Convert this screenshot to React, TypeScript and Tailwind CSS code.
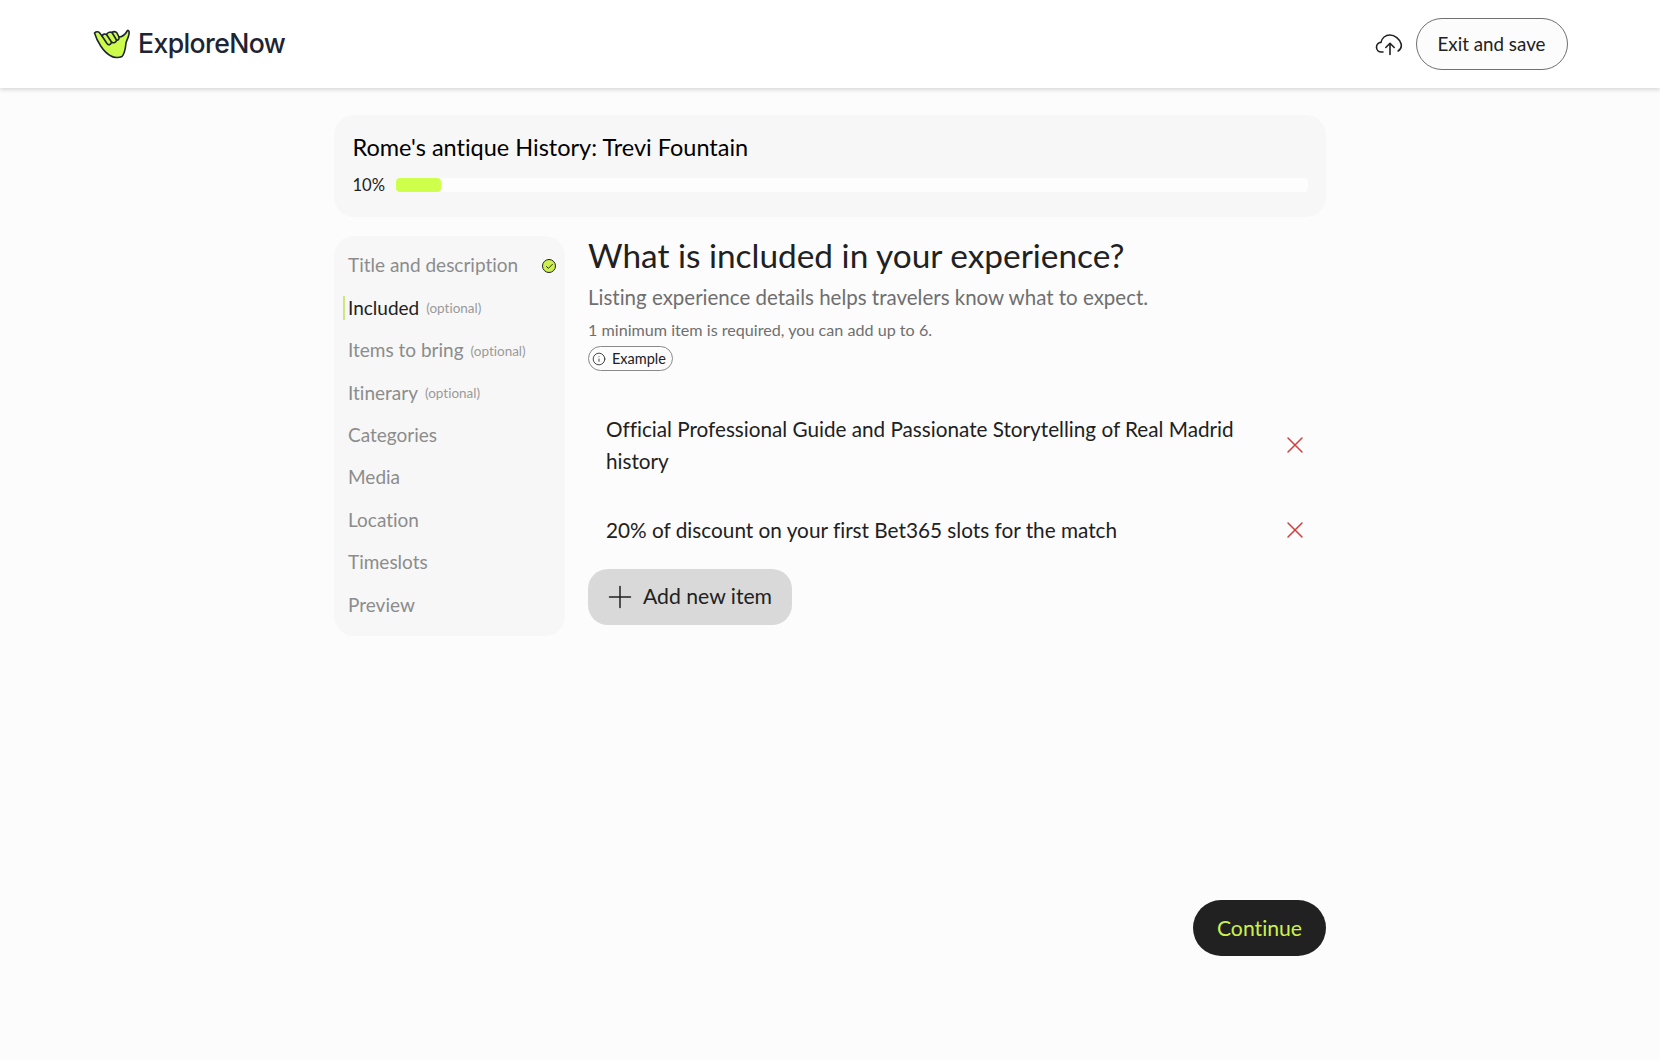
import React from 'react';
import { Plus, X, Info, Check } from 'lucide-react';

const steps = [
  { label: 'Title and description', done: true },
  { label: 'Included', optional: true, active: true },
  { label: 'Items to bring', optional: true },
  { label: 'Itinerary', optional: true },
  { label: 'Categories' },
  { label: 'Media' },
  { label: 'Location' },
  { label: 'Timeslots' },
  { label: 'Preview' },
];

const Logo = () => (
  <svg width="37" height="31" viewBox="0 0 37 31" className="shrink-0">
    <path
      d="M1.5 5 C3.5 3 6 3.5 7.5 6 L9 8 C10 6 12 5.5 13.5 6.5 C14.5 4.5 17 3.5 19 4.5 C20 3.5 22.5 3 24 5 L26 9 C29 9 32.5 6 34.5 2.5 C36 2 36.3 4 36 6 C35.5 10 33.5 12 33 15 C32.5 20 31.5 26 29 28.5 C26 30 21 30 18 28 C10 24 4 13 1.5 5 Z"
      fill="#cdfb4b"
      stroke="#1d2433"
      strokeWidth="1.6"
      strokeLinejoin="round"
    />
    <path
      d="M9 8 L14 15.5 C15.5 17.5 18 17 18.5 14 L13.5 6.5 M18.5 14 C20.5 15.5 23.5 14.5 23.5 12 L19 4.5 M23.5 12 C25 12.5 26.5 11 26 9"
      fill="none"
      stroke="#1d2433"
      strokeWidth="1.6"
      strokeLinecap="round"
      strokeLinejoin="round"
    />
  </svg>
);

const CloudIcon = () => (
  <svg width="28" height="24" viewBox="0 0 28 24" fill="none" stroke="#212121" strokeWidth="1.6" strokeLinecap="round" strokeLinejoin="round">
    <path d="M8 20 H6.5 C3.5 20 1.5 17.8 1.5 15.2 C1.5 12.6 3.5 10.6 6 10.4 C7 6 10.5 3 14.8 3 C20 3 24.5 7 26 11.5 C26.8 14.5 25.6 17.5 23.2 19" />
    <path d="M15 22.5 V11.5 M10.8 15.5 L15 11.3 L19.2 15.5" />
  </svg>
);

export default function App() {
  return (
    <div className="min-h-[1060px] bg-[#fcfcfc] font-['Lato',sans-serif] [font-variant-ligatures:none] text-[#212121]">
      <header className="h-[88px] bg-white shadow-[0_2px_4px_rgba(0,0,0,0.14)] flex items-center justify-between pl-[93px] pr-[92px]">
        <div className="flex items-center gap-[8px]">
          <Logo />
          <span className="font-['Inter',sans-serif] text-[26.6px] font-medium tracking-[-0.6px] text-[#1d2433]">ExploreNow</span>
        </div>
        <div className="flex items-center gap-[13px]">
          <CloudIcon />
          <button className="h-[52px] w-[152px] rounded-full border border-[#707070] bg-[#fcfcfc] pr-[1px] text-[18.8px] text-[#212121]">Exit and save</button>
        </div>
      </header>

      <main className="w-[992px] mx-auto pt-[27px]">
        <section className="h-[102px] rounded-[20px] bg-[#f7f7f7] pl-[18.5px] pr-[18px] pt-[16px]">
          <h1 className="text-[23.5px] leading-[32px] text-black">Rome's antique History: Trevi Fountain</h1>
          <div className="mt-[10px] flex items-center gap-[10.5px]">
            <span className="text-[16.6px] leading-[24px] text-[#212121]">10%</span>
            <div className="flex-1 h-[14px] rounded-[4px] bg-[#fdfdfd]">
              <div className="w-[45px] h-full rounded-[4px] bg-[#cdff4b]" />
            </div>
          </div>
        </section>

        <div className="flex gap-[23px] mt-[19px] items-start">
          <nav className="w-[231px] h-[400px] shrink-0 rounded-[20px] bg-[#f7f7f7] pt-[8.5px] px-[9px]">
            {steps.map((s) => (
              <div key={s.label} className="h-[42.4px] flex items-center">
                <div className={`h-[24px] w-[5px] border-l-2 ${s.active ? 'border-[#cfe57d]' : 'border-transparent'}`} />
                <span className={`text-[19px] ${s.active ? 'text-[#212121]' : 'text-[#8c8c8c]'}`}>{s.label}</span>
                {s.optional && <span className="ml-[7px] mt-[1px] text-[13.5px] text-[#9a9a9a]">(optional)</span>}
                {s.done && (
                  <span className="ml-auto mt-[1px] w-[14px] h-[14px] rounded-full bg-[#cdf14b] border border-[#212121] flex items-center justify-center">
                    <Check size={9} strokeWidth={2.5} className="text-[#212121]" />
                  </span>
                )}
              </div>
            ))}
          </nav>

          <div className="flex-1">
            <h2 className="text-[33.4px] leading-[38px] text-[#212121]">What is included in your experience?</h2>
            <p className="mt-[8px] text-[20.5px] leading-[30px] text-[#6f6f6f]">Listing experience details helps travelers know what to expect.</p>
            <p className="mt-[7px] text-[16.15px] leading-[22px] text-[#6f6f6f]">1 minimum item is required, you can add up to 6.</p>
            <button className="mt-[5px] h-[25px] w-[85px] rounded-full border border-[#8a8a8a] flex items-center pl-[3px] gap-[6px] text-[14.5px] text-[#212121]">
              <Info size={14} strokeWidth={1.4} />
              Example
            </button>

            <ul className="mt-[42px]">
              <li className="flex items-center justify-between pl-[18px] pr-[17px]">
                <span className="w-[650px] text-[20.7px] leading-[32px]">Official Professional Guide and Passionate Storytelling of Real Madrid history</span>
                <X size={28} strokeWidth={1.25} className="text-[#d13c3c]" />
              </li>
              <li className="flex items-center justify-between pl-[18px] pr-[17px] mt-[37px]">
                <span className="text-[20.75px] leading-[32px]">20% of discount on your first Bet365 slots for the match</span>
                <X size={28} strokeWidth={1.25} className="text-[#d13c3c]" />
              </li>
            </ul>

            <button className="mt-[23px] h-[56px] w-[204px] rounded-[20px] bg-[#d9d9d9] flex items-center pl-[14px] gap-[5px] text-[21.2px] text-[#212121]">
              <Plus size={36} strokeWidth={1} />
              Add new item
            </button>
          </div>
        </div>

        <div className="flex justify-end mt-[264px]">
          <button className="h-[56px] w-[133px] rounded-full bg-[#212121] pt-[2px] text-[21.2px] text-[#cdf14b]">Continue</button>
        </div>
      </main>
    </div>
  );
}
